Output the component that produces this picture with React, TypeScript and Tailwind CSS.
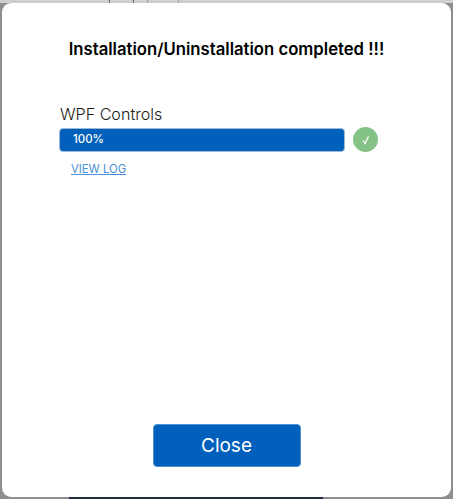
export default function App() {
  return (
    <div className="flex h-[499px] w-[453px] flex-col overflow-hidden bg-[#8f8f8f] [font-family:Inter,'Noto_Sans',sans-serif]">
      <div className="flex h-[3px] shrink-0 bg-[#cfcfcf] pl-[109px]">
        <div className="w-px bg-[#6b6b6b]" />
        <div className="ml-[23px] w-px bg-[#6b6b6b]" />
        <div className="ml-[13px] w-px bg-[#a0a0a0]" />
        <div className="ml-[30px] w-px bg-[#a0a0a0]" />
      </div>
      <div className="mx-[2px] flex h-[494px] shrink-0 flex-col rounded-[9px] bg-white">
        <h1 className="mt-[35px] text-center text-[16.7px] leading-[22px] font-semibold text-black">
          Installation/Uninstallation completed !!!
        </h1>
        <div className="mt-[44px] pl-[58px] text-[16.1px] leading-[20px] font-light text-[#1a1a1a]">WPF Controls</div>
        <div className="mt-[3px] flex items-center pl-[57px]">
          <div className="flex h-[24px] w-[286px] items-center rounded-[4px] border border-[#9fb9d8] bg-[#0060bb] pl-[13px] text-[11.5px] font-medium text-white">
            100%
          </div>
          <div className="ml-[8px] flex h-[25px] w-[25px] items-center justify-center rounded-full bg-[#85c285]">
            <svg width="10" height="10" viewBox="0 0 10 10" fill="none" stroke="white" strokeWidth="1.2">
              <path d="M2 5.5 L4 8.5 L7.5 1.5" />
            </svg>
          </div>
        </div>
        <a className="mt-[9px] ml-[69px] w-fit text-[11.3px] leading-[16px] text-[#4a90d9] underline">VIEW LOG</a>
        <div className="mt-auto mb-[30px] flex justify-center">
          <button className="h-[43px] w-[148px] rounded-[4px] border border-[#4d8fd0] bg-[#0060bb] pt-[2px] text-[19px] text-white">
            Close
          </button>
        </div>
      </div>
      <div className="ml-[69px] h-[2px] w-[254px] shrink-0 bg-[#1c2f42]" />
    </div>
  );
}
